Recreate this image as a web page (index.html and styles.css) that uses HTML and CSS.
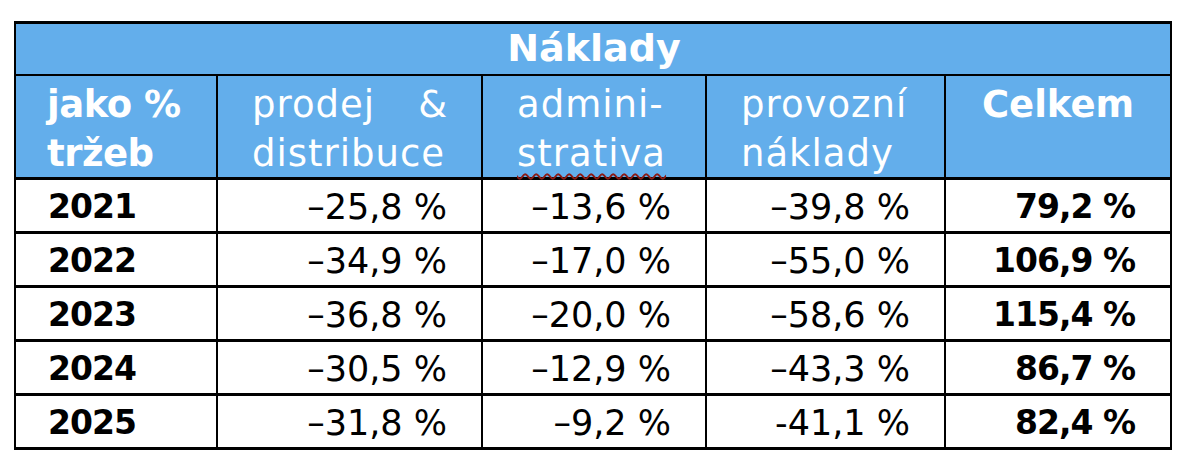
FILE: index.html
```html
<!DOCTYPE html>
<html lang="cs">
<head>
<meta charset="utf-8">
<title>Náklady</title>
<link rel="stylesheet" href="styles.css">
</head>
<body>
<div class="sheet" role="table" aria-label="Náklady">
  <div class="title" role="columnheader">Náklady</div>

  <div class="head head-first" role="columnheader"><span class="line">jako %</span><span class="line">tržeb</span></div>
  <div class="head" role="columnheader"><span class="line justify"><span>prodej</span> <span>&amp;</span></span><span class="line">distribuce</span></div>
  <div class="head" role="columnheader"><span class="line">admini-</span><span class="line"><span class="spell">strativa</span></span></div>
  <div class="head" role="columnheader"><span class="line">provozní</span><span class="line">náklady</span></div>
  <div class="head head-total" role="columnheader"><span class="line">Celkem</span></div>

  <div class="cell year">2021</div>
  <div class="cell num">–25,8 %</div>
  <div class="cell num">–13,6 %</div>
  <div class="cell num">–39,8 %</div>
  <div class="cell num total">79,2 %</div>

  <div class="cell year">2022</div>
  <div class="cell num">–34,9 %</div>
  <div class="cell num">–17,0 %</div>
  <div class="cell num">–55,0 %</div>
  <div class="cell num total">106,9 %</div>

  <div class="cell year">2023</div>
  <div class="cell num">–36,8 %</div>
  <div class="cell num">–20,0 %</div>
  <div class="cell num">–58,6 %</div>
  <div class="cell num total">115,4 %</div>

  <div class="cell year">2024</div>
  <div class="cell num">–30,5 %</div>
  <div class="cell num">–12,9 %</div>
  <div class="cell num">–43,3 %</div>
  <div class="cell num total">86,7 %</div>

  <div class="cell year">2025</div>
  <div class="cell num">–31,8 %</div>
  <div class="cell num">–9,2 %</div>
  <div class="cell num">-41,1 %</div>
  <div class="cell num total">82,4 %</div>
</div>
</body>
</html>
```
FILE: styles.css
```css
html, body {
  margin: 0;
  padding: 0;
  background: #ffffff;
}

body {
  font-family: "DejaVu Sans", "Noto Sans", sans-serif;
  color: #000;
}

.sheet {
  display: grid;
  grid-template-columns: 202px 265px 224px 239px 226px;
  grid-template-rows: 52px 104px repeat(5, 54px);
  width: max-content;
  margin: 21px 0 0 14px;
  border-top: 3px solid #000;
  border-left: 2px solid #000;
}

.sheet > div {
  box-sizing: border-box;
  border-right: 2px solid #000;
  border-bottom: 3px solid #000;
}

.title {
  grid-column: 1 / -1;
  background: #63aeeb;
  color: #fff;
  font-weight: bold;
  font-size: 38px;
  line-height: 49px;
  text-align: center;
  padding-left: 2px;
}

.sheet > .title {
  border-bottom-width: 2px;
}

.head {
  background: #63aeeb;
  color: #fff;
  font-size: 37px;
  line-height: 49px;
  letter-spacing: 1px;
  padding: 4px 33px 0 34px;
  display: flex;
  flex-direction: column;
}

.head .line {
  display: block;
  white-space: nowrap;
}

.head .justify {
  display: flex;
  justify-content: space-between;
}

.head-first {
  font-weight: bold;
  letter-spacing: -0.5px;
  padding-left: 31px;
}

.head-total {
  font-weight: bold;
  letter-spacing: 0;
  text-align: center;
  padding-left: 20px;
  padding-right: 20px;
}

.spell {
  text-decoration: underline wavy #8c1a14;
  text-decoration-thickness: 2px;
  text-underline-offset: 7px;
}

.cell {
  display: flex;
  align-items: center;
  background: #fff;
  white-space: nowrap;
  padding-top: 2px;
}

.year {
  font-weight: bold;
  font-size: 33px;
  letter-spacing: -1px;
  padding-left: 32px;
}

.num {
  justify-content: flex-end;
  font-size: 35px;
  padding-right: 34px;
}

.total {
  font-weight: bold;
  font-size: 33px;
  letter-spacing: -1px;
  padding-right: 35px;
}
```
